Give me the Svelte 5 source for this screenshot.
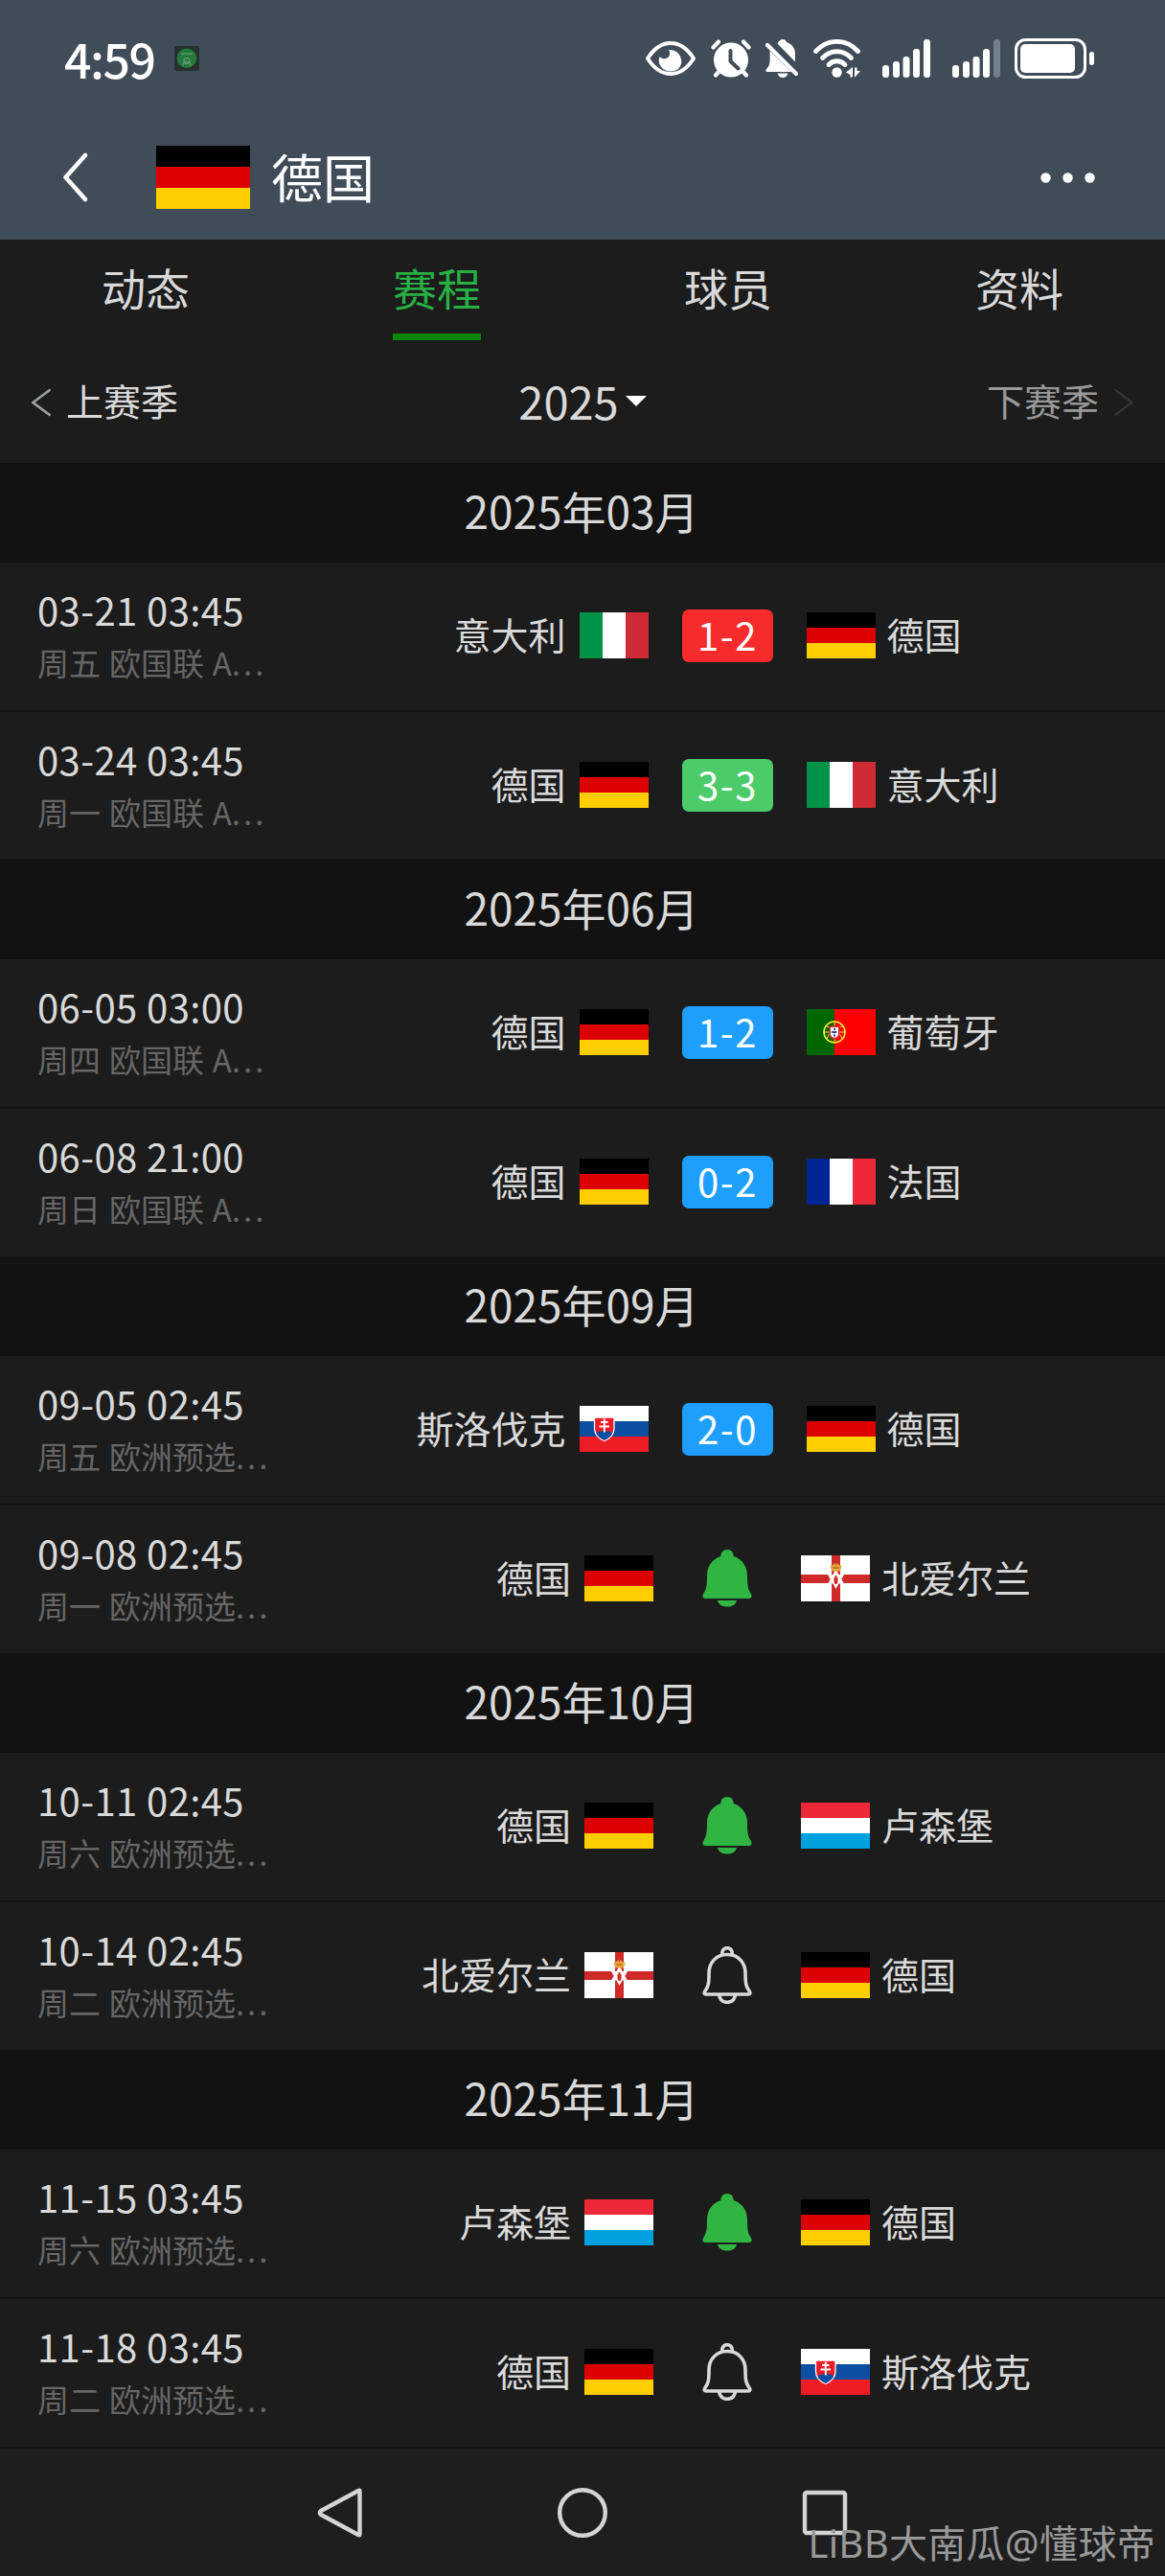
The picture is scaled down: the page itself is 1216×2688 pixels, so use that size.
<script lang="ts">
  type Match = {
    date: string;
    info: string;
    home: string;
    away: string;
    score?: string;
    result?: "win" | "draw" | "loss";
    subscribed?: boolean;
  };

  let activeTab = $state("赛程");
  const tabs = ["动态", "赛程", "球员", "资料"];

  const names: Record<string, string> = {
    de: "德国",
    it: "意大利",
    pt: "葡萄牙",
    fr: "法国",
    sk: "斯洛伐克",
    ni: "北爱尔兰",
    lu: "卢森堡",
  };

  const months: { title: string; matches: Match[] }[] = [
    {
      title: "2025年03月",
      matches: [
        { date: "03-21 03:45", info: "周五 欧国联 A", home: "it", away: "de", score: "1-2", result: "win" },
        { date: "03-24 03:45", info: "周一 欧国联 A", home: "de", away: "it", score: "3-3", result: "draw" },
      ],
    },
    {
      title: "2025年06月",
      matches: [
        { date: "06-05 03:00", info: "周四 欧国联 A", home: "de", away: "pt", score: "1-2", result: "loss" },
        { date: "06-08 21:00", info: "周日 欧国联 A", home: "de", away: "fr", score: "0-2", result: "loss" },
      ],
    },
    {
      title: "2025年09月",
      matches: [
        { date: "09-05 02:45", info: "周五 欧洲预选", home: "sk", away: "de", score: "2-0", result: "loss" },
        { date: "09-08 02:45", info: "周一 欧洲预选", home: "de", away: "ni", subscribed: true },
      ],
    },
    {
      title: "2025年10月",
      matches: [
        { date: "10-11 02:45", info: "周六 欧洲预选", home: "de", away: "lu", subscribed: true },
        { date: "10-14 02:45", info: "周二 欧洲预选", home: "ni", away: "de", subscribed: false },
      ],
    },
    {
      title: "2025年11月",
      matches: [
        { date: "11-15 03:45", info: "周六 欧洲预选", home: "lu", away: "de", subscribed: true },
        { date: "11-18 03:45", info: "周二 欧洲预选", home: "de", away: "sk", subscribed: false },
      ],
    },
  ];

  // three equal stripes
  const stripes: Record<string, { vertical: boolean; colors: string[] }> = {
    de: { vertical: false, colors: ["#000000", "#dd0000", "#ffce00"] },
    it: { vertical: true, colors: ["#009246", "#ffffff", "#ce2b37"] },
    fr: { vertical: true, colors: ["#002395", "#ffffff", "#ed2939"] },
    sk: { vertical: false, colors: ["#ffffff", "#0b4ea2", "#ee1c25"] },
    lu: { vertical: false, colors: ["#ed2939", "#ffffff", "#00a1de"] },
  };

  const bars = [
    { x: 0, top: 27 },
    { x: 11, top: 23 },
    { x: 21.5, top: 18 },
    { x: 32, top: 10 },
    { x: 43, top: 0 },
  ];
</script>

{#snippet flag(code: string)}
  <svg class="flag" viewBox="0 0 72 48" preserveAspectRatio="none">
    {#if stripes[code]}
      {#each stripes[code].colors as color, i}
        {#if stripes[code].vertical}
          <rect x={i * 24} width="24" height="48" fill={color} />
        {:else}
          <rect y={i * 16} width="72" height="16" fill={color} />
        {/if}
      {/each}
    {/if}
    {#if code === "sk"}
      <path d="M15.5 12h20.5v11.500c0 6-4.500 10.500-10.250 13-5.750-2.500-10.250-7-10.250-13z" fill="#ee1c25" stroke="#fff" stroke-width="1.300" />
      <path d="M17.500 29c2-3 4-3.500 5-1.500 1.500-3 5-3 6.500 0 1-2 3.500-1.500 5 1.500-1.800 3-4.500 5.200-8.300 7-3.700-1.800-6.500-4-8.200-7z" fill="#0b4ea2" />
      <path d="M25.800 13.500v14M22 17h7.500M20.500 21.500h10.500" stroke="#fff" stroke-width="1.900" />
    {:else if code === "pt"}
      <rect width="29" height="48" fill="#006600" />
      <rect x="29" width="43" height="48" fill="#ff0000" />
      <circle cx="29" cy="24" r="11" fill="none" stroke="#f5e93b" stroke-width="1.600" />
      <path d="M18 24h22M29 13v22M20 18c6 0 14 5 17 13M38 18c-6 0-14 5-17 13" fill="none" stroke="#f5e93b" stroke-width="1" />
      <path d="M23.500 17.500h11v8c0 4-2.500 6-5.500 6s-5.500-2-5.500-6z" fill="#e0202a" />
      <path d="M25 19h8v6.500c0 2.800-1.800 4.200-4 4.200s-4-1.400-4-4.200z" fill="#fff" />
      <path d="M29 20v8.500M26 23.800h6" stroke="#1c2f8c" stroke-width="1.800" stroke-dasharray="2 1.200" />
    {:else if code === "ni"}
      <rect width="72" height="48" fill="#fff" />
      <path d="M36.500 0v48M0 24.500h72" stroke="#cf2a2a" stroke-width="9" />
      <path d="M36.500 14l3 6h5.500l-2.700 5 2.700 4.500h-5.500l-3 5.500-3-5.500H28l2.700-4.500L28 20h5.500z" fill="#fff" />
      <path d="M34.500 28v-5h1v-2h2v2h1v5l-1 2h-2z" fill="#cf2a2a" />
      <path d="M32 16.500l-1.500-5.500 3.500-1.500 2.500-2 2.500 2 3.500 1.500-1.500 5.500z" fill="#e8a33a" />
      <path d="M36.500 6v4M33.500 13h6" stroke="#a3521c" stroke-width="1.200" />
    {/if}
  </svg>
{/snippet}

{#snippet signal(weak: boolean)}
  <svg class="signal" viewBox="0 0 50 40">
    {#each bars as bar, i}
      <rect x={bar.x} y={bar.top} width="7" height={40 - bar.top} rx="3.300" fill={weak && i === 4 ? "#71818b" : "#fff"} />
    {/each}
  </svg>
{/snippet}

<div class="screen">
  <header>
    <div class="status-bar">
      <span class="clock">4:59</span>
      <svg class="app-icon" viewBox="0 0 26 26">
        <rect width="26" height="26" rx="2" fill="#26302f" />
        <circle cx="13" cy="12.800" r="10.300" fill="#237a3b" />
        <path d="M8 9.500V8h10v1.500M9 20.500c0-3 1.500-4 4-4s4 1 4 4" fill="none" stroke="#6da07c" stroke-width="1.200" />
        <circle cx="13" cy="15.500" r="3" fill="none" stroke="#6da07c" stroke-width="1.200" />
      </svg>
      <div class="status-icons">
        <svg class="eye" viewBox="0 0 52 36">
          <path d="M2 18C9 7 17 2 26 2s17 5 24 16C43 29 35 34 26 34S9 29 2 18z" fill="none" stroke="#fff" stroke-width="4" stroke-linejoin="round" />
          <path d="M24 9a5.500 5.500 0 0 1-9.500 7A12 12 0 0 0 18 29q8 5 16 0a12 12 0 0 0-10-20z" fill="#fff" />
        </svg>
        <svg class="alarm" viewBox="0 0 42 40">
          <circle cx="21" cy="21.500" r="18" fill="#fff" />
          <path d="M2.500 8.500l5.500-6M39.500 8.500l-5.500-6M9 33l-4 4.500M33 33l4 4.500" stroke="#fff" stroke-width="4.200" stroke-linecap="round" />
          <path d="M20.500 12v11l8 7.500" fill="none" stroke="#414c59" stroke-width="4" stroke-linecap="round" stroke-linejoin="round" />
        </svg>
        <svg class="bell-off" viewBox="0 0 34 40">
          <path d="M12.500 4.500C14 1.500 16 0 18 0s3.500 1 4 3c6 2 9 7 9 12v8.500z" fill="#fff" />
          <path d="M4.500 12l22.500 22H2c-2 0-2-2-1-3 3.500-3 4-7 3.500-19z" fill="#fff" />
          <path d="M2 6l30 30" stroke="#fff" stroke-width="4.200" stroke-linecap="round" />
          <path d="M12.500 35.500h11c-1 3-3 4.500-5.500 4.500s-4.500-1.500-5.500-4.500z" fill="#fff" />
        </svg>
        <svg class="wifi" viewBox="0 0 49 40">
          <g fill="none" stroke="#fff" stroke-width="4.800" stroke-linecap="round">
            <path d="M2.500 12.500c12.500-13.500 31.500-13.500 44 0" />
            <path d="M9.500 19.500c8.500-9 21.500-9 30 0" />
            <path d="M16 26.500c5-5 12-5 17 0" />
          </g>
          <circle cx="24.500" cy="34.500" r="5.200" fill="#fff" />
          <path d="M41 29v10.500h-2.500V37L34 34.500zM43 40V29.500h2.500V33H49z" fill="#fff" />
        </svg>
        {@render signal(false)}
        {@render signal(true)}
        <svg class="battery" viewBox="0 0 83 42">
          <rect x="1.500" y="1.500" width="72" height="39" rx="10" fill="none" stroke="#fff" stroke-width="3" />
          <rect x="6" y="6" width="57" height="30" rx="5" fill="#fff" />
          <rect x="78" y="14" width="5" height="14" rx="2.500" fill="#fff" />
        </svg>
      </div>
    </div>
    <div class="title-bar">
      <svg class="back" viewBox="0 0 26 52">
        <path d="M23 3L2.500 26 23 49" fill="none" stroke="#fff" stroke-width="4.500" stroke-linecap="round" stroke-linejoin="round" />
      </svg>
      <div class="team-flag">{@render flag("de")}</div>
      <h1>德国</h1>
      <svg class="more" viewBox="0 0 57 11">
        <circle cx="5.500" cy="5.500" r="5.200" fill="#fff" />
        <circle cx="28.500" cy="5.500" r="5.200" fill="#fff" />
        <circle cx="51.500" cy="5.500" r="5.200" fill="#fff" />
      </svg>
    </div>
  </header>

  <nav class="tabs">
    {#each tabs as tab}
      <button class="tab" class:active={tab === activeTab} onclick={() => (activeTab = tab)}>
        <span>{tab}</span>
      </button>
    {/each}
  </nav>

  <div class="season">
    <div class="season-step prev">
      <svg viewBox="0 0 21 30"><path d="M19.500 1.500L1.500 15l18 13.500" fill="none" stroke="#9a9fa3" stroke-width="2.800" /></svg>
      <span>上赛季</span>
    </div>
    <div class="season-year">
      <span>2025</span>
      <svg viewBox="0 0 22 11"><path d="M0 0h22L11 11z" fill="#fff" /></svg>
    </div>
    <div class="season-step next">
      <span>下赛季</span>
      <svg viewBox="0 0 21 30"><path d="M1.500 1.500L19.500 15l-18 13.500" fill="none" stroke="#343434" stroke-width="2.200" /></svg>
    </div>
  </div>

  {#each months as month}
    <section>
      <h2>{month.title}</h2>
      {#each month.matches as match}
        <div class="match">
          <div class="when">
            <div class="date">{match.date}</div>
            <div class="info">{match.info}<span class="dots">...</span></div>
          </div>
          <div class="teams">
            <div class="team home">
              <span>{names[match.home]}</span>
              {@render flag(match.home)}
            </div>
            {#if match.score}
              <div class="score {match.result}">{match.score}</div>
            {:else}
              <svg class="bell" class:subscribed={match.subscribed} viewBox="0 0 52 60">
                {#if match.subscribed}
                  <path d="M26 0c4.500 0 6.500 3 6.700 7C42 10 47 18 47 27c0 10 .5 14 3.500 18.500 2 3 1 5.500-1.500 5.500H3c-2.500 0-3.500-2.500-1.500-5.500C4.500 41 5 37 5 27c0-9 5-17 14.300-20C19.500 3 21.500 0 26 0z" />
                  <path d="M16 53h20c-1 4.500-5 6.500-10 6.500S17 57.500 16 53z" />
                {:else}
                  <path d="M26 8.500C14.500 8.500 7 17 7 28c0 10-.5 14-4 18.500-1.500 2-1 3.500 1 3.500h44c2 0 2.500-1.500 1-3.500-3.500-4.500-4-8.500-4-18.500 0-11-7.500-19.500-19-19.500z" />
                  <path d="M20.800 9c-.5-4.500 1.700-7.300 5.200-7.300S31.700 4.500 31.200 9M17.500 50.500c.8 5 4 7.800 8.500 7.800s7.700-2.800 8.500-7.800" />
                {/if}
              </svg>
            {/if}
            <div class="team away">
              {@render flag(match.away)}
              <span>{names[match.away]}</span>
            </div>
          </div>
        </div>
      {/each}
    </section>
  {/each}

  <footer>
    <svg viewBox="0 0 52 52"><path d="M46.500 3.500v45q0 1.500-1.500.5L6 28q-2.500-2 0-4L45 3q1.500-1 1.500.5z" /></svg>
    <svg viewBox="0 0 52 52"><circle cx="26" cy="26" r="23.800" /></svg>
    <svg viewBox="0 0 52 52"><rect x="5" y="5" width="42" height="42" rx="2" /></svg>
    <span class="watermark">LiBB大南瓜@懂球帝</span>
  </footer>
</div>

<style>
  :global(body) {
    margin: 0;
    background: #1c1c1c;
  }

  .screen {
    width: 1216px;
    height: 2688px;
    overflow: hidden;
    display: flex;
    flex-direction: column;
    background: #1c1c1c;
    color: #d9d9d9;
    font-family: "Noto Sans CJK SC", sans-serif;
  }

  svg {
    display: block;
    flex: none;
  }

  header {
    height: 250px;
    background: #414c59;
    color: #fff;
  }

  .status-bar {
    height: 122px;
    padding: 0 74px 0 67px;
    display: flex;
    align-items: center;
    box-sizing: border-box;
  }

  .clock {
    padding-bottom: 3px;
    font-size: 50px;
    font-weight: 500;
    line-height: 1;
    letter-spacing: -1.5px;
  }

  .app-icon {
    width: 26px;
    height: 26px;
    margin-left: 21px;
  }

  .status-icons {
    margin-left: auto;
    display: flex;
    align-items: center;
  }

  .eye {
    width: 52px;
    height: 36px;
  }

  .alarm {
    width: 42px;
    height: 40px;
    margin-left: 16px;
  }

  .bell-off {
    width: 34px;
    height: 40px;
    margin-left: 15px;
  }

  .wifi {
    width: 49px;
    height: 40px;
    margin-left: 16px;
  }

  .signal {
    width: 50px;
    height: 40px;
    margin-left: 23px;
  }

  .battery {
    width: 83px;
    height: 42px;
    margin-left: 15px;
  }

  .title-bar {
    height: 126px;
    padding: 0 73px 0 66px;
    display: flex;
    align-items: center;
  }

  .back {
    width: 26px;
    height: 52px;
  }

  .team-flag {
    width: 98px;
    height: 66px;
    margin-left: 71px;
  }

  h1 {
    margin: 0 0 0 22px;
    padding-bottom: 3px;
    font-size: 54px;
    font-weight: 400;
    line-height: 1;
  }

  .more {
    width: 57px;
    height: 11px;
    margin-left: auto;
  }

  .tabs {
    height: 106px;
    display: grid;
    grid-template-columns: repeat(4, 1fr);
  }

  .tab {
    display: flex;
    justify-content: center;
    padding: 0;
    border: none;
    background: none;
    color: inherit;
    font: inherit;
    font-size: 46px;
  }

  .tab span {
    height: 98px;
    line-height: 98px;
    border-bottom: 7px solid transparent;
  }

  .tab.active span {
    color: #27b044;
    border-color: #078608;
  }

  .season {
    height: 127px;
    padding: 0 33px;
    display: grid;
    grid-template-columns: 1fr auto 1fr;
    align-items: center;
    box-sizing: border-box;
  }

  .season span {
    padding-bottom: 4px;
  }

  .season-step {
    display: flex;
    align-items: center;
    font-size: 39px;
    line-height: 1;
  }

  .season-step svg {
    width: 21px;
    height: 30px;
  }

  .prev {
    gap: 15px;
  }

  .next {
    justify-content: flex-end;
    gap: 15px;
    color: #999;
  }

  .season-year {
    display: flex;
    align-items: center;
    gap: 7px;
    font-size: 47px;
    line-height: 1;
  }

  .season-year svg {
    width: 22px;
    height: 11px;
    margin-bottom: 2px;
  }

  h2 {
    margin: 0;
    height: 104px;
    background: #121212;
    font-size: 46px;
    font-weight: 400;
    line-height: 98px;
    text-align: center;
    text-indent: -2px;
  }

  .match {
    height: 154px;
    display: flex;
    align-items: center;
  }

  .match + .match {
    border-top: 2px solid #121212;
  }

  .when {
    width: 264px;
    padding-left: 39px;
    white-space: nowrap;
  }

  .date {
    font-size: 40px;
    line-height: 54px;
    letter-spacing: 0.4px;
  }

  .info {
    font-size: 33px;
    line-height: 56px;
    color: #666;
    word-spacing: 1.5px;
  }

  .dots {
    letter-spacing: 3px;
  }

  .teams {
    flex: 1;
    padding: 0 1px 2px 0;
    display: grid;
    grid-template-columns: 1fr auto 1fr;
    align-items: center;
  }

  .team {
    display: flex;
    align-items: center;
    font-size: 39px;
    line-height: 1;
  }

  .team span {
    padding-bottom: 4px;
  }

  .home {
    justify-content: flex-end;
    gap: 14px;
  }

  .away {
    gap: 12px;
  }

  .flag {
    width: 72px;
    height: 48px;
  }

  .team-flag .flag {
    width: 98px;
    height: 66px;
  }

  .score {
    width: 95px;
    height: 55px;
    margin: 0 35px;
    border-radius: 7px;
    color: #fff;
    font-size: 40px;
    line-height: 53px;
    letter-spacing: 1.5px;
    text-indent: 1px;
    text-align: center;
  }

  .win {
    background: #f62c2c;
  }

  .draw {
    background: #4bcb69;
  }

  .loss {
    background: #1e9ffd;
  }

  .bell {
    width: 52px;
    height: 60px;
    margin: 0 51px;
    fill: none;
    stroke: #d9d9d9;
    stroke-width: 3.6;
  }

  .bell.subscribed {
    fill: #30b543;
    stroke: none;
  }

  footer {
    position: relative;
    flex: 1;
    display: flex;
    justify-content: center;
    align-items: center;
    gap: 201px;
    border-top: 2px solid #121212;
    background: #1e1e1e;
  }

  footer svg {
    width: 52px;
    height: 52px;
    fill: none;
    stroke: #d4d4d4;
    stroke-width: 4.4;
    stroke-linejoin: round;
  }

  .watermark {
    position: absolute;
    right: 10px;
    bottom: 14px;
    color: #999;
    font-family: "Noto Sans", "Noto Sans CJK SC", sans-serif;
    font-size: 40px;
    line-height: 1;
    letter-spacing: 0.3px;
    white-space: nowrap;
  }
</style>
